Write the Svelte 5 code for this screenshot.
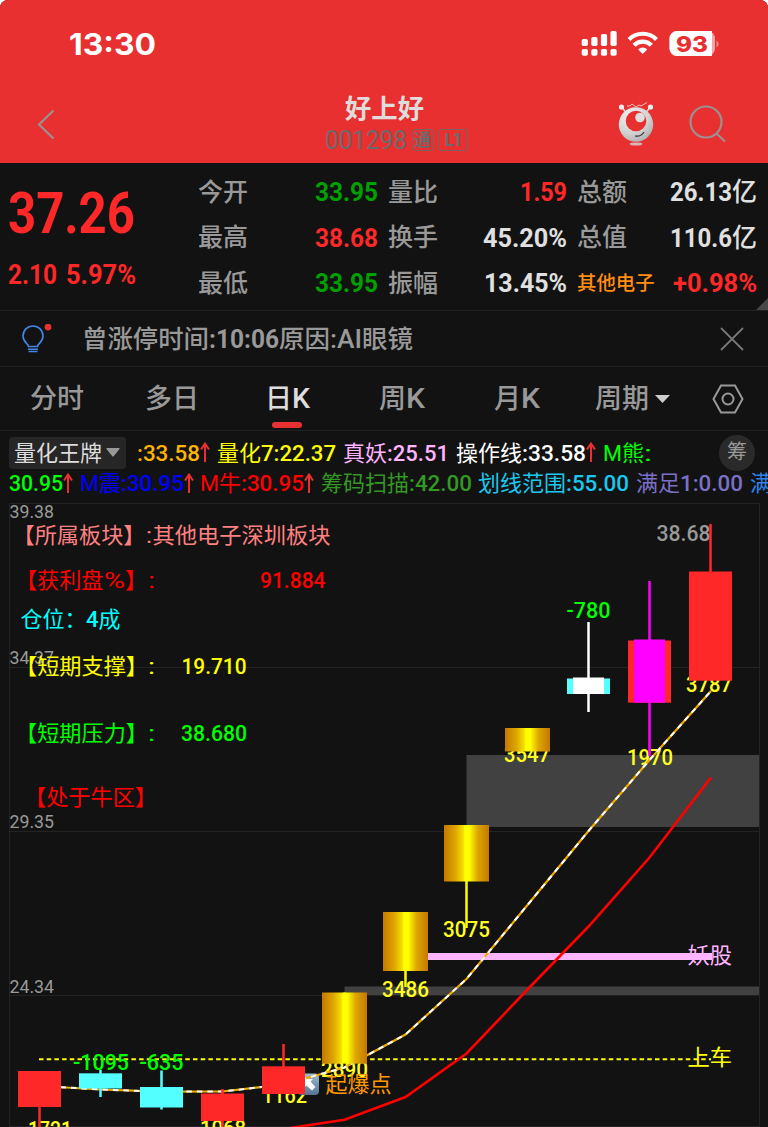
<script lang="ts">
    type Part = [text: string, width: number];

    interface Indicator {
        color: string;
        parts: Part[];
        up?: boolean;
    }

    interface Candle {
        x: number;
        top: number;
        bottom: number;
        high: number;
        low: number;
        kind: "up" | "down" | "gold" | "white" | "magenta";
    }

    const stats: { label: string; size: number; value: Part[]; tone: string }[] = [
        { label: "今开", size: 25, value: [["33.95", 63]], tone: "green" },
        { label: "量比", size: 25, value: [["1.59", 47]], tone: "red" },
        { label: "总额", size: 25, value: [["26.13", 62], ["亿", 25]], tone: "plain" },
        { label: "最高", size: 25, value: [["38.68", 63]], tone: "red" },
        { label: "换手", size: 25, value: [["45.20%", 84]], tone: "plain" },
        { label: "总值", size: 25, value: [["110.6", 62], ["亿", 25]], tone: "plain" },
        { label: "最低", size: 25, value: [["33.95", 63]], tone: "green" },
        { label: "振幅", size: 25, value: [["13.45%", 83]], tone: "plain" },
        { label: "其他电子", size: 19.4, value: [["+0.98%", 84]], tone: "red" },
    ];

    const notice: Part[] = [
        ["曾涨停时间", 127],
        [":10:06", 70],
        ["原因", 51],
        [":AI", 32],
        ["眼镜", 51],
    ];

    const tabs: Part[][] = [
        [["分时", 54]],
        [["多日", 54]],
        [["日", 27], ["K", 18]],
        [["周", 27], ["K", 19]],
        [["月", 27], ["K", 19]],
        [["周期", 54]],
    ];
    let activeTab = $state(2);

    const topIndicators: Indicator[] = [
        { color: "#ffb400", parts: [[":33.58", 63]], up: true },
        { color: "#ffff00", parts: [["量化", 44], ["7:22.37", 75]] },
        { color: "#ffb4ff", parts: [["真妖", 44], [":25.51", 62]] },
        { color: "#ffffff", parts: [["操作线", 66], [":33.58", 64]], up: true },
        { color: "#00ff00", parts: [["M", 19], ["熊", 22], [":", 8]] },
    ];

    const bottomIndicators: Indicator[] = [
        { color: "#00ff00", parts: [["30.95", 54]], up: true },
        { color: "#0000ff", parts: [["M", 19], ["震", 22], [":30.95", 63]], up: true },
        { color: "#ff0000", parts: [["M", 19], ["牛", 22], [":30.95", 63]], up: true },
        { color: "#339922", parts: [["筹码扫描", 88], [":42.00", 63]] },
        { color: "#1ac8ee", parts: [["划线范围", 88], [":55.00", 63]] },
        { color: "#7b70c8", parts: [["满足", 44], ["1:0.00", 63]] },
        { color: "#2f83e8", parts: [["满", 22]] },
    ];

    const axis = [
        { y: 518, text: "39.38" },
        { y: 664, text: "34.37" },
        { y: 828, text: "29.35" },
        { y: 992.5, text: "24.34" },
    ];

    const candles: Candle[] = [
        { x: 39.5, top: 1071, bottom: 1107, high: 1071, low: 1127, kind: "up" },
        { x: 100.5, top: 1073.3, bottom: 1088.5, high: 1070, low: 1097, kind: "down" },
        { x: 161.5, top: 1087, bottom: 1107.5, high: 1070.5, low: 1109.5, kind: "down" },
        { x: 222.5, top: 1093.5, bottom: 1121, high: 1089, low: 1127, kind: "up" },
        { x: 283.5, top: 1066.3, bottom: 1094, high: 1044, low: 1094, kind: "up" },
        { x: 344.5, top: 992.5, bottom: 1063.7, high: 992.5, low: 1063, kind: "gold" },
        { x: 405.5, top: 912, bottom: 971, high: 912, low: 987, kind: "gold" },
        { x: 466.5, top: 825, bottom: 881.5, high: 825, low: 928, kind: "gold" },
        { x: 527.5, top: 728, bottom: 751.5, high: 728, low: 751, kind: "gold" },
        { x: 588.5, top: 677.5, bottom: 694, high: 622, low: 712, kind: "white" },
        { x: 649.5, top: 639.5, bottom: 702.7, high: 581, low: 756, kind: "magenta" },
        { x: 710.5, top: 571.5, bottom: 680.7, high: 524, low: 680, kind: "up" },
    ];

    const wickColor = {
        up: "#ff2828",
        down: "#54ffff",
        gold: "#ffff00",
        white: "#ffffff",
        magenta: "#ff00ff",
    };

    const volumes = [
        { x: 28, y: 1136.5, w: 44, text: "1721" },
        { x: 200, y: 1136, w: 46, text: "1068" },
        { x: 262, y: 1102.5, w: 45, text: "1162" },
        { x: 321, y: 1077, w: 47, text: "2890" },
        { x: 382, y: 996.7, w: 47, text: "3486" },
        { x: 443, y: 937.3, w: 47, text: "3075" },
        { x: 504, y: 762, w: 46, text: "3547" },
        { x: 627, y: 765, w: 46, text: "1970" },
        { x: 686, y: 691.7, w: 46, text: "3787" },
    ];

    const outflows = [
        { x: 73, y: 1070, w: 56, text: "-1095" },
        { x: 139.5, y: 1070, w: 44, text: "-635" },
        { x: 566.5, y: 618, w: 44, text: "-780" },
    ];

    const notes = [
        { x: 12.5, y: 543, w: 133, color: "#ff8080", text: "【所属板块】" },
        { x: 146, y: 543, w: 6, color: "#ff8080", text: ":" },
        { x: 152.5, y: 543, w: 178, color: "#ff8080", text: "其他电子深圳板块" },
        { x: 15, y: 588, w: 88.5, color: "#ff0000", text: "【获利盘" },
        { x: 104, y: 588, w: 21, color: "#ff0000", text: "%" },
        { x: 125, y: 588, w: 22, color: "#ff0000", text: "】" },
        { x: 148, y: 588, w: 7, color: "#ff0000", text: ":" },
        { x: 260, y: 587.5, w: 65.5, color: "#ff0000", text: "91.884" },
        { x: 20.5, y: 627, w: 66, color: "#00ffff", text: "仓位：" },
        { x: 86, y: 627, w: 12.5, color: "#00ffff", text: "4" },
        { x: 98.5, y: 627, w: 22, color: "#00ffff", text: "成" },
        { x: 15, y: 674, w: 133, color: "#ffff00", text: "【短期支撑】" },
        { x: 148, y: 674, w: 7, color: "#ffff00", text: ":" },
        { x: 181.5, y: 674, w: 65, color: "#ffff00", text: "19.710" },
        { x: 15, y: 740.5, w: 133, color: "#00ff00", text: "【短期压力】" },
        { x: 148, y: 740.5, w: 7, color: "#00ff00", text: ":" },
        { x: 181, y: 740.5, w: 66, color: "#00ff00", text: "38.680" },
        { x: 24, y: 805, w: 133, color: "#ff0000", text: "【处于牛区】" },
        { x: 687.5, y: 963, w: 44.5, color: "#ffb4ff", text: "妖股" },
        { x: 687.5, y: 1065, w: 44.5, color: "#ffff00", text: "上车" },
        { x: 325.5, y: 1092, w: 66, color: "#ff9900", text: "起爆点" },
    ];

    const average =
        "39.5,1086 100.5,1089.5 161.5,1091.7 222.5,1091.5 283.5,1084.5 344.5,1067.5 405.5,1034.5 466.5,979 527.5,905 588.5,831 649.5,760 711,691";
    const slowLine =
        "283.5,1129 344.5,1119.7 405.5,1097 466.5,1053.5 527.5,989.5 588.5,926.5 649.5,857.5 711,777.5";

    const isNumber = (text: string) => /\d/.test(text);
</script>

<!-- text squeezed to a fixed advance, its bottom edge is the baseline -->
{#snippet fit(text: string, width: number, size: number)}
    <svg class={["fit", isNumber(text) && "number"]} {width} height={size * 0.72}>
        <text
            y={size * 0.72}
            font-size={size}
            textLength={width}
            lengthAdjust="spacingAndGlyphs">{text}</text
        >
    </svg>
{/snippet}

{#snippet line(parts: Part[], size: number)}
    <span class="line">
        {#each parts as [text, width]}
            {@render fit(text, width, size)}
        {/each}
    </span>
{/snippet}

{#snippet indicators(items: Indicator[])}
    {#each items as item}
        <span class="indicator" style:color={item.color}>
            {@render line(item.parts, 22)}
            {#if item.up}
                <svg class="up" width="10" height="21" viewBox="0 0 10 21">
                    <path d="M5 20V1.5M1 7.5l4-6 4 6" />
                </svg>
            {/if}
        </span>
    {/each}
{/snippet}

<div class="screen">
    <header>
        <div class="status">
            <span class="clock">{@render fit("13:30", 87, 30)}</span>
            <svg width="139" height="30" viewBox="0 0 139 30" fill="#fff">
                {#each [7, 9, 12, 15] as h, i}
                    <rect x={0.7 + i * 9.6} y={17 - h} width="6.2" height={h} rx="1.8" />
                    <rect x={0.7 + i * 9.6} y="20" width="6.2" height="6.7" rx="1.8" />
                {/each}
                <g fill="none" stroke="#fff" stroke-width="4.2">
                    <path d="M48 10.4a19.5 19.5 0 0 1 27.5 0" />
                    <path d="M53 16.2a12.3 12.3 0 0 1 17.4 0" />
                </g>
                <path d="M57.2 20.4a6.5 6.5 0 0 1 9 0L61.700 25z" />
                <rect x="88.5" y="2" width="45.5" height="25" rx="7.5" fill="#f5a5a6" />
                <path d="M96 2h35v25H96a7.5 7.5 0 0 1-7.5-7.5v-10A7.5 7.5 0 0 1 96 2z" />
                <path d="M135.5 11.5a4 4 0 0 1 0 7z" fill="#f08a8b" />
                <text x="95" y="22.8" class="battery" textLength="32" lengthAdjust="spacingAndGlyphs">93</text>
            </svg>
        </div>
        <div class="nav">
            <svg width="36" height="36" viewBox="0 0 36 36" class="thin">
                <path d="M23.5 4.5L9 18.5l14.5 14" />
            </svg>
            <div class="title">
                <h1>{@render fit("好上好", 79, 26.3)}</h1>
                <div class="code">
                    {@render fit("001298", 82, 25)}
                    <span class="badge small">通</span>
                    <span class="badge wide">L1</span>
                </div>
            </div>
            <div class="tools">
                <svg width="40" height="46" viewBox="0 0 40 46">
                    <defs>
                        <radialGradient id="ball" cx=".35" cy=".25" r=".85">
                            <stop offset="0" stop-color="#f2f2f2" />
                            <stop offset=".6" stop-color="#d2d2d2" />
                            <stop offset="1" stop-color="#aaa" />
                        </radialGradient>
                    </defs>
                    <path d="M5.5 6l5 6M34.5 6l-5 6" stroke="#ddd" stroke-width="1.5" />
                    <circle cx="5.5" cy="6" r="2.6" fill="#eee" />
                    <circle cx="34.5" cy="6" r="2.6" fill="#eee" />
                    <path d="M11 5h3l2-2 4 3 3-2 2 1 6-3.5" fill="none" stroke="#f3c0c0" />
                    <ellipse cx="20" cy="43" rx="6.5" ry="1.6" fill="#d5b8b8" />
                    <circle cx="20" cy="23.5" r="17.2" fill="url(#ball)" />
                    <circle cx="20" cy="20" r="10.3" fill="#e73030" />
                    <circle cx="24" cy="16.5" r="4.8" fill="#dedede" />
                    <path d="M19 35q6 1 9-4" fill="none" stroke="#333" stroke-width="1.2" />
                </svg>
                <svg width="40" height="40" viewBox="0 0 40 40" class="thin search">
                    <circle cx="18" cy="18" r="15.5" />
                    <path d="M28.5 29.5l8.500 8" />
                </svg>
            </div>
        </div>
    </header>

    <section class="quote">
        <div class="price">
            {@render fit("37.26", 127, 56.5)}
            <div class="change">
                {@render fit("2.10", 49, 27)}
                {@render fit("5.97%", 70, 27)}
            </div>
        </div>
        <div class="stats">
            {#each stats as stat}
                <div class="stat">
                    <span class={stat.size < 25 ? "sector" : "label"}>
                        {@render fit(stat.label, stat.label.length * stat.size, stat.size)}
                    </span>
                    <span class="value {stat.tone}">{@render line(stat.value, 26)}</span>
                </div>
            {/each}
        </div>
        <i class="corner"></i>
    </section>

    <section class="notice">
        <svg class="bulb" width="34" height="34" viewBox="0 0 34 34">
            <path
                d="M9.5 22.5c0-3-5.5-4-5.5-10.5a10 10 0 0 1 20 0c0 6.500-5.5 7.5-5.5 10.5zM9 25.3h10M9.5 27.5h9"
                fill="none"
                stroke="#4187e8"
                stroke-width="1.6"
            />
            <circle cx="29" cy="3" r="3.4" fill="#e83030" />
        </svg>
        {@render line(notice, 25.3)}
        <svg class="close" width="26" height="26" viewBox="0 0 26 26">
            <path d="M2 2l22 22M24 2L2 24" />
        </svg>
    </section>

    <nav class="tabs">
        {#each tabs as tab, i}
            <button class:active={i === activeTab} onclick={() => (activeTab = i)}>
                {@render line(tab, 27)}
                {#if i === 5}
                    <svg width="15" height="8"><path d="M0 0h15l-7.5 8z" fill="#ccc" /></svg>
                {/if}
            </button>
        {/each}
        <svg class="gear" width="34" height="32" viewBox="0 0 34 32">
            <path d="M10 2.5h14l7.5 13.5-7.5 13.5h-14l-7.5-13.5z" />
            <circle cx="17" cy="16" r="5.5" />
        </svg>
    </nav>

    <section class="legend">
        <div class="row first">
            <span class="picker">
                {@render fit("量化王牌", 88, 22)}
                <svg width="14" height="9"><path d="M1 0h12q1 0 .5 1L7.5 8.5h-1L.5 1Q0 0 1 0z" fill="#999" /></svg>
            </span>
            {@render indicators(topIndicators)}
            <span class="chip">{@render fit("筹", 20, 20)}</span>
        </div>
        <div class="row">
            {@render indicators(bottomIndicators)}
        </div>
    </section>

    <svg class="chart" width="768" height="624" viewBox="0 503 768 624">
        <defs>
            <linearGradient id="gold">
                <stop offset="0" stop-color="#c47800" />
                <stop offset=".25" stop-color="#dda500" />
                <stop offset=".43" stop-color="#f5e000" />
                <stop offset=".46" stop-color="#ffff00" />
                <stop offset=".56" stop-color="#ffff00" />
                <stop offset=".75" stop-color="#dda500" />
                <stop offset="1" stop-color="#c47800" />
            </linearGradient>
            <linearGradient id="key" x2="0" y2="1">
                <stop offset="0" stop-color="#9fbdd3" />
                <stop offset="1" stop-color="#547492" />
            </linearGradient>
        </defs>

        <path class="grid" d="M9.5 1127V503.5H759.5V1127M9 667.5H759M9 831.5H759M9 995.5H759M9 1126.5H759" />
        <path d="M466.5 755H759V827H466.5zM344.5 986.5H759V995H344.5z" fill="#414141" />

        {#each axis as tick}
            <text class="tick" x="9.5" y={tick.y} textLength="44.5" lengthAdjust="spacingAndGlyphs">{tick.text}</text>
        {/each}
        <text class="high" x="656.5" y="541" textLength="54" lengthAdjust="spacingAndGlyphs">38.68</text>

        <path d="M405.5 956.5H712" stroke="#ffb4ff" stroke-width="7" />
        <path d="M39 1059.2H711" stroke="#ffff00" stroke-width="2" stroke-dasharray="4.5 3.2" />

        {#each volumes as v}
            <text class="number" x={v.x} y={v.y} fill="#ffff22" textLength={v.w} lengthAdjust="spacingAndGlyphs">{v.text}</text>
        {/each}
        {#each outflows as v}
            <text class="number" x={v.x} y={v.y} fill="#00ff00" textLength={v.w} lengthAdjust="spacingAndGlyphs">{v.text}</text>
        {/each}

        <rect x="298" y="1073.5" width="21" height="21.5" rx="4" fill="url(#key)" />
        <path d="M303.5 1079h9.5l-2.5 2.5 5 5.5-3.5 3.5-5.5-5-3 3z" fill="#fff" />

        <g fill="none" stroke-width="2">
            <polyline points={average} stroke="#f0aa00" stroke-width="2.2" />
            <polyline points={average} stroke="#fff" stroke-dasharray="5.5 5" />
            <polyline points={slowLine} stroke="#ff0000" stroke-width="2.6" />
        </g>

        {#each candles as c}
            <path d="M{c.x} {c.high}V{c.low}" stroke={wickColor[c.kind]} stroke-width="2.5" />
            {#if c.kind === "gold"}
                <rect x={c.x - 22.5} y={c.top} width="45" height={c.bottom - c.top} fill="url(#gold)" />
            {:else if c.kind === "white" || c.kind === "magenta"}
                <rect
                    x={c.x - 21.5}
                    y={c.top + 1}
                    width="43"
                    height={c.bottom - c.top - 1}
                    fill={c.kind === "white" ? "#54ffff" : "#ff2828"}
                />
                <rect x={c.x - 15.5} y={c.top} width="31" height={c.bottom - c.top} fill={wickColor[c.kind]} />
            {:else}
                <rect x={c.x - 21.5} y={c.top} width="43" height={c.bottom - c.top} fill={wickColor[c.kind]} />
            {/if}
        {/each}

        {#each notes as n}
            <text
                class:number={isNumber(n.text)}
                x={n.x}
                y={n.y}
                fill={n.color}
                textLength={n.w}
                lengthAdjust="spacingAndGlyphs">{n.text}</text
            >
        {/each}
    </svg>
</div>

<style>
    :global(body) {
        background: #fff;
    }

    .screen {
        width: 768px;
        height: 1127px;
        overflow: hidden;
        border-radius: 8px 8px 0 0;
        background: #121212;
        color: #999;
        font-family: Roboto, "Noto Sans CJK SC", sans-serif;
    }

    svg {
        display: block;
        flex: none;
    }

    .fit {
        overflow: visible;
        fill: currentColor;
    }

    .line {
        display: flex;
        align-items: flex-end;
    }

    header {
        height: 163px;
        background: #e83030;
    }

    .status {
        display: flex;
        align-items: center;
        justify-content: space-between;
        height: 88px;
        padding: 0 48px 0 69px;
        box-sizing: border-box;
    }

    .clock {
        color: #fff;
        font-family: Inter, sans-serif;
        font-weight: 700;
    }

    .battery {
        font: 800 22px Inter, sans-serif;
        fill: #e83030;
    }

    .nav {
        display: grid;
        grid-template-columns: 200px 308px 1fr;
        align-items: center;
        height: 71px;
        padding-left: 30px;
        box-sizing: border-box;
    }

    .thin {
        fill: none;
        stroke: #9b9090;
        stroke-width: 2.2;
    }

    .title {
        display: flex;
        flex-direction: column;
        align-items: center;
        gap: 12px;
        padding-top: 3px;
    }

    h1 {
        margin: 0;
        color: #e0dcdc;
        font-weight: 700;
    }

    .code {
        display: flex;
        align-items: center;
        height: 22px;
        padding-left: 24px;
        color: #6b6b6b;
    }

    .badge {
        flex: none;
        height: 22px;
        box-sizing: border-box;
        border: 1px solid #796464;
        border-radius: 3px;
        font-size: 17px;
        font-weight: 700;
        line-height: 20px;
        text-align: center;
    }

    .small {
        width: 22px;
        margin-left: 5px;
    }

    .wide {
        width: 30px;
        margin-left: 4px;
        font-family: Inter, sans-serif;
    }

    .tools {
        display: flex;
        align-items: center;
        justify-content: flex-end;
        gap: 32px;
        padding-right: 40px;
    }

    .search {
        margin-top: 0;
    }

    .quote {
        position: relative;
        display: flex;
        height: 147px;
        border-bottom: 1px solid #202020;
        font-weight: 700;
    }

    .price {
        width: 190px;
        padding: 29px 0 0 8px;
        box-sizing: border-box;
        color: #ff2828;
    }

    .change {
        display: flex;
        gap: 9px;
        margin-top: 32px;
    }

    .stats {
        display: grid;
        grid-template-columns: 180px 179px 180px;
        column-gap: 10px;
        grid-auto-rows: 45.5px;
        padding: 6px 0 0 8px;
    }

    .stat {
        display: flex;
        align-items: center;
        justify-content: space-between;
    }

    .value .fit:not(.number) {
        font-weight: 500;
    }

    .label {
        font-weight: 500;
    }

    .sector {
        color: #ff8c14;
        font-weight: 500;
    }

    .green {
        color: #00a000;
    }

    .red {
        color: #ff2828;
    }

    .plain {
        color: #e0e0e0;
    }

    .corner {
        position: absolute;
        right: 0;
        bottom: 0;
        border-left: 12px solid transparent;
        border-bottom: 12px solid #484848;
    }

    .notice {
        display: flex;
        align-items: center;
        height: 55px;
        padding: 0 23px 0 19px;
        border-bottom: 1px solid #202020;
        font-weight: 500;
    }

    .bulb {
        margin-top: 5px;
    }

    .notice .line {
        margin: 1px 0 0 29px;
    }

    .notice .number {
        font-weight: 700;
    }

    .close {
        margin-left: auto;
        fill: none;
        stroke: #777;
        stroke-width: 1.8;
    }

    .tabs {
        display: flex;
        height: 63px;
        align-items: center;
        border-bottom: 1px solid #202020;
    }

    button {
        display: flex;
        align-items: center;
        justify-content: center;
        gap: 6px;
        position: relative;
        width: 115px;
        height: 63px;
        padding: 0 1px 0 0;
        border: 0;
        background: none;
        color: #999;
        font: inherit;
        font-weight: 500;
    }

    .active {
        color: #ddd;
    }

    .active::after {
        content: "";
        position: absolute;
        bottom: 2px;
        width: 30px;
        height: 6px;
        border-radius: 3px;
        background: #e83030;
    }

    .gear {
        margin-left: 21px;
        fill: none;
        stroke: #999;
        stroke-width: 2;
    }

    .legend {
        height: 72px;
        padding-left: 9px;
        box-sizing: border-box;
        overflow: hidden;
    }

    .row {
        display: flex;
        align-items: center;
        gap: 6.6px;
        height: 22px;
    }

    .first {
        gap: 7px;
        height: 39px;
        padding-top: 2px;
    }

    .picker {
        display: flex;
        align-items: center;
        gap: 4px;
        width: 112px;
        height: 32px;
        margin-right: 4px;
        padding-left: 5px;
        border-radius: 4px;
        background: #262626;
        color: #ddd;
    }

    .indicator {
        display: flex;
        align-items: center;
    }

    .number {
        font-weight: 500;
    }

    .quote .number {
        font-weight: 700;
    }

    .code .number {
        font-weight: 400;
    }

    .clock .number {
        font-weight: 700;
    }

    .up {
        fill: none;
        stroke: #e83030;
        stroke-width: 2;
    }

    .chip {
        display: grid;
        place-items: center;
        width: 36px;
        height: 36px;
        margin: 0 13px 0 auto;
        border-radius: 50%;
        background: #2a2a2a;
    }

    .chart {
        font-size: 22px;
    }

    .grid {
        fill: none;
        stroke: #232323;
    }

    .tick {
        font-size: 18.5px;
        fill: #999;
    }

    .high {
        fill: #999;
        font-weight: 500;
    }
</style>
